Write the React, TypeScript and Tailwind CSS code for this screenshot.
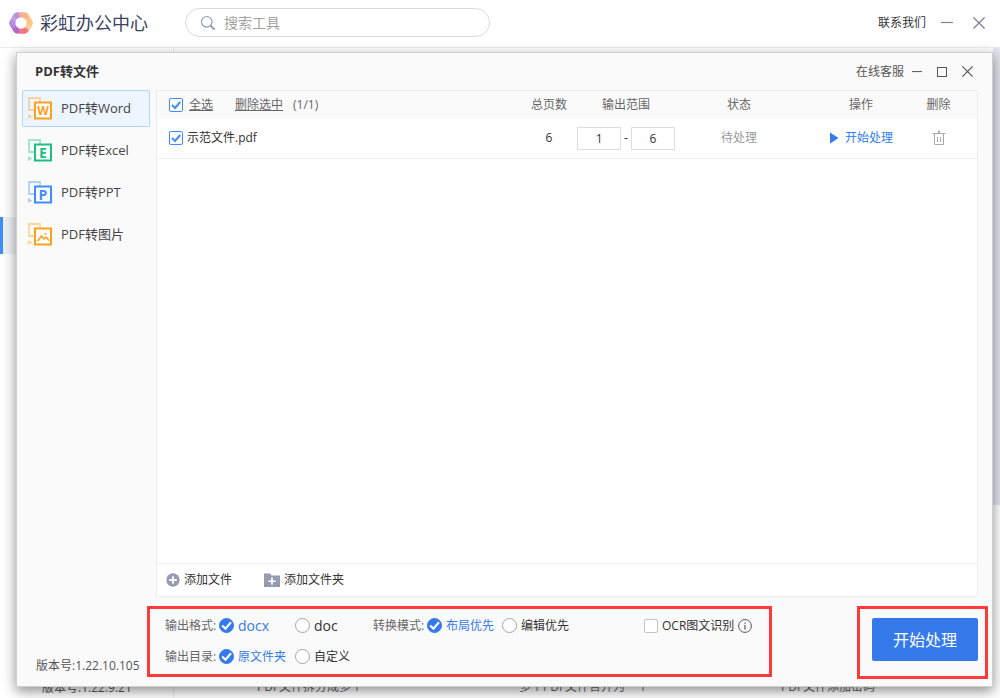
import { useState } from 'react';
import type { ReactNode } from 'react';

type Row = { id: number; name: string; pages: number; from: number; to: number; status: string };

const files: Row[] = [{ id: 1, name: '示范文件.pdf', pages: 6, from: 1, to: 6, status: '待处理' }];

/* Icons */

function LogoIcon() {
  const petals = [
    ['#f59a8c', 0],
    ['#fbb877', 60],
    ['#fcc583', 120],
    ['#f0647c', 180],
    ['#a864d6', 240],
    ['#b48ae0', 300],
  ] as const;
  return (
    <svg className="h-6 w-6" viewBox="0 0 24 24" aria-hidden="true">
      {petals.map(([color, angle]) => (
        <path
          key={angle}
          d="M5.2 3.4Q6 1.4 8 1.2H15.5Q17.6 1.2 18.6 3L20 5.4L15.6 8L14 6.4H9.4L8 7.6L4.6 5.4Z"
          fill={color}
          opacity="0.88"
          transform={`rotate(${angle} 12 12)`}
        />
      ))}
      <path d="M2 10.5l4-6.5M2.4 14l4.4-7M4 16.5l3-4.5M8 3h7M17 20l4-7" stroke="#fff" strokeWidth="0.4" opacity="0.6" />
    </svg>
  );
}

function ConvertIcon({ color, children }: { color: string; children: ReactNode }) {
  return (
    <svg className="h-6 w-6 shrink-0" viewBox="0 0 24 24" fill="none" aria-hidden="true">
      <path d="M6 13H1V1h11v4" stroke={color} strokeWidth="1.8" opacity="0.4" />
      <path d="M0 17l4.5 2.5L0 22z" fill={color} opacity="0.4" />
      <rect x="7" y="5.5" width="16" height="16" fill="#fff" stroke={color} strokeWidth="2" />
      {children}
    </svg>
  );
}

function IconLetter({ color, children }: { color: string; children: string }) {
  return (
    <text
      x="15"
      y={children === 'W' ? 17.8 : 18.6}
      textAnchor="middle"
      fill={color}
      className={`font-['Open_Sans',sans-serif] font-bold ${children === 'W' ? 'text-[12px]' : 'text-[14px]'}`}
    >
      {children}
    </text>
  );
}

function CheckMark({ className }: { className: string }) {
  return (
    <svg className={className} viewBox="0 0 14 14" fill="none" stroke="currentColor" aria-hidden="true">
      <path d="M3 7l3 3 5.2-6" strokeWidth="2" />
    </svg>
  );
}

function MinusIcon({ className }: { className: string }) {
  return (
    <svg className={className} viewBox="0 0 12 12" fill="none" stroke="currentColor" aria-hidden="true">
      <path d="M0 5.5h12" strokeWidth="1.2" />
    </svg>
  );
}

function CloseIcon({ className }: { className: string }) {
  return (
    <svg className={className} viewBox="0 0 12 12" fill="none" stroke="currentColor" aria-hidden="true">
      <path d="M.4.4l11.2 11.2M11.6.4L.4 11.6" strokeWidth="1.3" />
    </svg>
  );
}

/* Form controls */

interface CheckboxProps {
  id: string;
  label: string;
  checked: boolean;
  onChange: (checked: boolean) => void;
  labelClass?: string;
}

function Checkbox({ id, label, checked, onChange, labelClass = '' }: CheckboxProps) {
  return (
    <span className="flex items-center gap-1">
      <span className="grid">
        <input
          id={id}
          type="checkbox"
          checked={checked}
          onChange={(e) => onChange(e.target.checked)}
          className="peer col-start-1 row-start-1 h-3.5 w-3.5 appearance-none rounded-xs border border-[#c4c4c4] bg-white checked:border-[#3f8cff]"
        />
        <CheckMark className="pointer-events-none invisible col-start-1 row-start-1 h-3.5 w-3.5 text-[#3f8cff] peer-checked:visible" />
      </span>
      <label htmlFor={id} className={labelClass}>
        {label}
      </label>
    </span>
  );
}

interface RadioProps {
  name: string;
  value: string;
  current: string;
  onSelect: (value: string) => void;
  className?: string;
}

function Radio({ name, value, current, onSelect, className = '' }: RadioProps) {
  return (
    <label className={`flex items-center gap-1 ${className}`}>
      <span className="grid">
        <input
          type="radio"
          name={name}
          checked={current === value}
          onChange={() => onSelect(value)}
          className="peer col-start-1 row-start-1 h-[15px] w-[15px] appearance-none rounded-full border border-[#a6a6a6] bg-white checked:border-[#357aeb] checked:bg-[#357aeb]"
        />
        <CheckMark className="pointer-events-none invisible col-start-1 row-start-1 h-[15px] w-[15px] text-white peer-checked:visible" />
      </span>
      <span className={current === value ? 'text-[#357aeb]' : ''}>{value}</span>
    </label>
  );
}

/* Main window, mostly covered by the dialog */

function MainWindow() {
  return (
    <div className="flex min-h-screen flex-col bg-white">
      <header className="flex h-12 items-center border-b border-[#ececec] pr-[15px] pb-0.5 pl-[9px]">
        <LogoIcon />
        <h1 className="ml-[7px] w-[145px] text-[18px] leading-6 text-[#3d4363]">彩虹办公中心</h1>
        <div className="flex h-[29px] w-[305px] items-center rounded-full border border-[#d9d9e3] px-3.5">
          <svg className="h-4 w-4" viewBox="0 0 16 16" fill="none" stroke="#8f9bb8" aria-hidden="true">
            <circle cx="6.8" cy="6.8" r="5.3" strokeWidth="1.2" />
            <path d="M10.6 10.6l4 4" strokeWidth="2" />
          </svg>
          <input
            type="search"
            aria-label="搜索工具"
            placeholder="搜索工具"
            className="ml-2 min-w-0 flex-1 text-sm leading-5 outline-none placeholder:text-[#a3a3a3]"
          />
        </div>
        <a href="#contact" className="ml-auto text-[#333]">
          联系我们
        </a>
        <button type="button" aria-label="最小化" className="ml-[15px] text-[#7d8296]">
          <MinusIcon className="h-3 w-3" />
        </button>
        <button type="button" aria-label="关闭" className="ml-5 text-[#7d8296]">
          <CloseIcon className="h-3 w-3" />
        </button>
      </header>
      <div className="flex flex-1">
        <aside className="flex w-[174px] shrink-0 flex-col border-r border-[#ececec] pt-[169px]">
          <div className="h-[37px] border-l-3 border-[#3f8cff] bg-[#eef1f4]" />
          <p className="mt-auto pb-0.5 pl-[42px] text-[#555]">版本号:1.22.9.21</p>
        </aside>
        <div className="flex min-w-0 flex-1 items-end pb-[3px] pl-[83px] whitespace-nowrap text-[#666]">
          <span className="w-[262px] shrink-0">PDF文件拆分成多个</span>
          <span className="w-[262px] shrink-0">多个PDF文件合并为一个</span>
          <span>PDF文件添加密码</span>
        </div>
        {/* scrollbar thumb */}
        <div className="h-[457px] w-[7px] bg-[#e2e4ec]" />
      </div>
    </div>
  );
}

/* Dialog */

const tools = [
  { label: 'PDF转Word', color: '#ff9f1a', letter: 'W' },
  { label: 'PDF转Excel', color: '#1bbf7e', letter: 'E' },
  { label: 'PDF转PPT', color: '#3f8cff', letter: 'P' },
  { label: 'PDF转图片', color: '#ff9f1a', letter: '' },
];

function ToolNav() {
  const [active, setActive] = useState('PDF转Word');
  return (
    <nav className="flex flex-col gap-[5px] pr-1.5 pl-[5px]">
      {tools.map((tool) => (
        <button
          key={tool.label}
          type="button"
          onClick={() => setActive(tool.label)}
          className={`flex h-[37px] items-center gap-[9px] rounded-xs border pl-[5px] text-[13px] text-[#444] ${
            active === tool.label ? 'border-[#b3d4ff] bg-[#edf5ff]' : 'border-transparent'
          }`}
        >
          <ConvertIcon color={tool.color}>
            {tool.letter ? (
              <IconLetter color={tool.color}>{tool.letter}</IconLetter>
            ) : (
              <path d="M9.5 18l4-5 2.5 3 2-2 3 3.5M16.5 11h2" stroke={tool.color} strokeWidth="1.5" />
            )}
          </ConvertIcon>
          {tool.label}
        </button>
      ))}
    </nav>
  );
}

function FileTable() {
  const [selected, setSelected] = useState(true);
  return (
    <table className="w-full table-fixed text-center">
      <thead>
        <tr className="h-7 bg-[#fafafa] text-[#666]">
          <th className="pl-3 text-left font-normal">
            <div className="flex items-center">
              <Checkbox id="select-all" label="全选" checked={selected} onChange={setSelected} labelClass="ml-0.5 underline" />
              <button type="button" className="ml-[22px] underline">
                删除选中
              </button>
              <span className="ml-2.5">(1/1)</span>
            </div>
          </th>
          <th className="w-[54px] font-normal">总页数</th>
          <th className="w-[100px] font-normal">输出范围</th>
          <th className="w-[126px] font-normal">状态</th>
          <th className="w-[118px] font-normal">操作</th>
          <th className="w-[57px] pr-5 font-normal">删除</th>
        </tr>
      </thead>
      <tbody>
        {files.map((file) => (
          <tr key={file.id} className="h-[39px] border-b border-[#f0f0f0] text-[#333]">
            <td className="pl-3">
              <Checkbox id={`file-${file.id}`} label={file.name} checked={selected} onChange={setSelected} />
            </td>
            <td>{file.pages}</td>
            <td>
              <div className="flex items-center justify-center gap-[3px]">
                <input aria-label="起始页" defaultValue={file.from} className="h-[23px] w-11 border border-[#ddd] bg-white text-center" />
                <span>-</span>
                <input aria-label="结束页" defaultValue={file.to} className="h-[23px] w-11 border border-[#ddd] bg-white text-center" />
              </div>
            </td>
            <td className="text-[#999]">{file.status}</td>
            <td>
              <button type="button" className="flex w-full items-center justify-center gap-1.5 text-[#2f7cf0]">
                <svg className="h-3 w-2.5" viewBox="0 0 10 12" aria-hidden="true">
                  <path d="M1 .5L9.5 6 1 11.5z" fill="#357aeb" />
                </svg>
                开始处理
              </button>
            </td>
            <td className="pr-5">
              <button type="button" aria-label="删除" className="block w-full">
                <svg className="mx-auto h-4 w-3.5" viewBox="0 0 14 16" fill="none" stroke="#aaa" aria-hidden="true">
                  <path d="M.5 3.5h13M6.5 3V1h1v2M2.5 4v10.5h9V4M5.5 7v5M8.5 7v5" />
                </svg>
              </button>
            </td>
          </tr>
        ))}
      </tbody>
    </table>
  );
}

function Options() {
  const [format, setFormat] = useState('docx');
  const [mode, setMode] = useState('布局优先');
  const [folder, setFolder] = useState('原文件夹');
  const [ocr, setOcr] = useState(false);
  return (
    <div className="relative pt-[13px] pr-5 pl-2 text-[#333]">
      <div className="flex h-[31px] items-center">
        <span className="w-[54px] text-[#666]">输出格式:</span>
        <Radio name="format" value="docx" current={format} onSelect={setFormat} className="w-[76px] text-sm" />
        <Radio name="format" value="doc" current={format} onSelect={setFormat} className="w-[78px] text-sm" />
        <span className="w-[54px] text-[#666]">转换模式:</span>
        <Radio name="mode" value="布局优先" current={mode} onSelect={setMode} className="w-[75px]" />
        <Radio name="mode" value="编辑优先" current={mode} onSelect={setMode} className="w-[142px]" />
        <Checkbox id="ocr" label="OCR图文识别" checked={ocr} onChange={setOcr} />
        <svg className="ml-1 h-3.5 w-3.5" viewBox="0 0 14 14" fill="none" stroke="#555" aria-hidden="true">
          <circle cx="7" cy="7" r="6.4" />
          <path d="M7 6v4.5M7 3.4v1.3" strokeWidth="1.2" />
        </svg>
      </div>
      <div className="flex h-[31px] items-center">
        <span className="w-[54px] text-[#666]">输出目录:</span>
        <Radio name="folder" value="原文件夹" current={folder} onSelect={setFolder} className="w-[76px]" />
        <Radio name="folder" value="自定义" current={folder} onSelect={setFolder} />
      </div>
      <div className="pointer-events-none absolute top-[9px] right-0 bottom-[9px] -left-2.5 border-3 border-[#ff3a3a]" />
    </div>
  );
}

function ConvertDialog() {
  return (
    <section
      role="dialog"
      aria-label="PDF转文件"
      className="absolute top-[52px] right-[7px] bottom-[11px] left-4 flex flex-col border border-[#cfcfcf] bg-[#fafafa] shadow-[0_4px_12px_rgba(0,0,0,0.45)]"
    >
      <header className="flex h-[37px] shrink-0 items-center pr-[19px] pl-[18px] text-[#555]">
        <h2 className="text-[13px] font-bold text-[#333]">PDF转文件</h2>
        <a href="#service" className="ml-auto">
          在线客服
        </a>
        <button type="button" aria-label="最小化" className="ml-2">
          <MinusIcon className="h-2.5 w-2.5" />
        </button>
        <button type="button" aria-label="最大化" className="ml-[15px] h-2.5 w-2.5 border border-current" />
        <button type="button" aria-label="关闭" className="ml-[15px]">
          <CloseIcon className="h-[11px] w-[11px]" />
        </button>
      </header>
      <div className="flex min-h-0 flex-1">
        <aside className="flex w-[139px] shrink-0 flex-col">
          <ToolNav />
          <p className="mt-auto pb-3 pl-[19px] text-[#555]">版本号:1.22.10.105</p>
        </aside>
        <main className="flex min-w-0 flex-1 flex-col pr-[14px]">
          <div className="flex flex-1 flex-col border border-[#ececec] bg-white">
            <FileTable />
            <div className="mt-auto flex h-[33px] items-center gap-8 border-t border-[#ececec] pl-[9px] text-[#333]">
              <button type="button" className="flex items-center gap-1">
                <svg className="h-3.5 w-3.5" viewBox="0 0 14 14" aria-hidden="true">
                  <circle cx="7" cy="7" r="6.7" fill="#959bb0" />
                  <path d="M7 3.2v7.6M3.2 7h7.6" stroke="#fff" strokeWidth="1.8" />
                </svg>
                添加文件
              </button>
              <button type="button" className="flex items-center gap-1">
                <svg className="h-3.5 w-4" viewBox="0 0 16 14" aria-hidden="true">
                  <path d="M0 .5h6l1.5 2H16V14H0z" fill="#959bb0" />
                  <path d="M8 4.6v7.2M4.4 8.2h7.2" stroke="#fff" strokeWidth="1.6" />
                </svg>
                添加文件夹
              </button>
            </div>
          </div>
          <footer className="flex h-[89px] shrink-0 items-stretch justify-between pl-px">
            <Options />
            <div className="relative pt-[21px]">
              <button type="button" className="h-[43px] w-[106px] rounded-xs bg-[#357aeb] text-base text-white">
                开始处理
              </button>
              <div className="pointer-events-none absolute top-[9px] -right-2.5 bottom-[7px] -left-[15px] border-3 border-[#ff3a3a]" />
            </div>
          </footer>
        </main>
      </div>
    </section>
  );
}

export default function App() {
  return (
    <div className="relative min-h-screen overflow-hidden font-['Open_Sans','Noto_Sans_CJK_SC',sans-serif] text-xs">
      <MainWindow />
      <ConvertDialog />
    </div>
  );
}
